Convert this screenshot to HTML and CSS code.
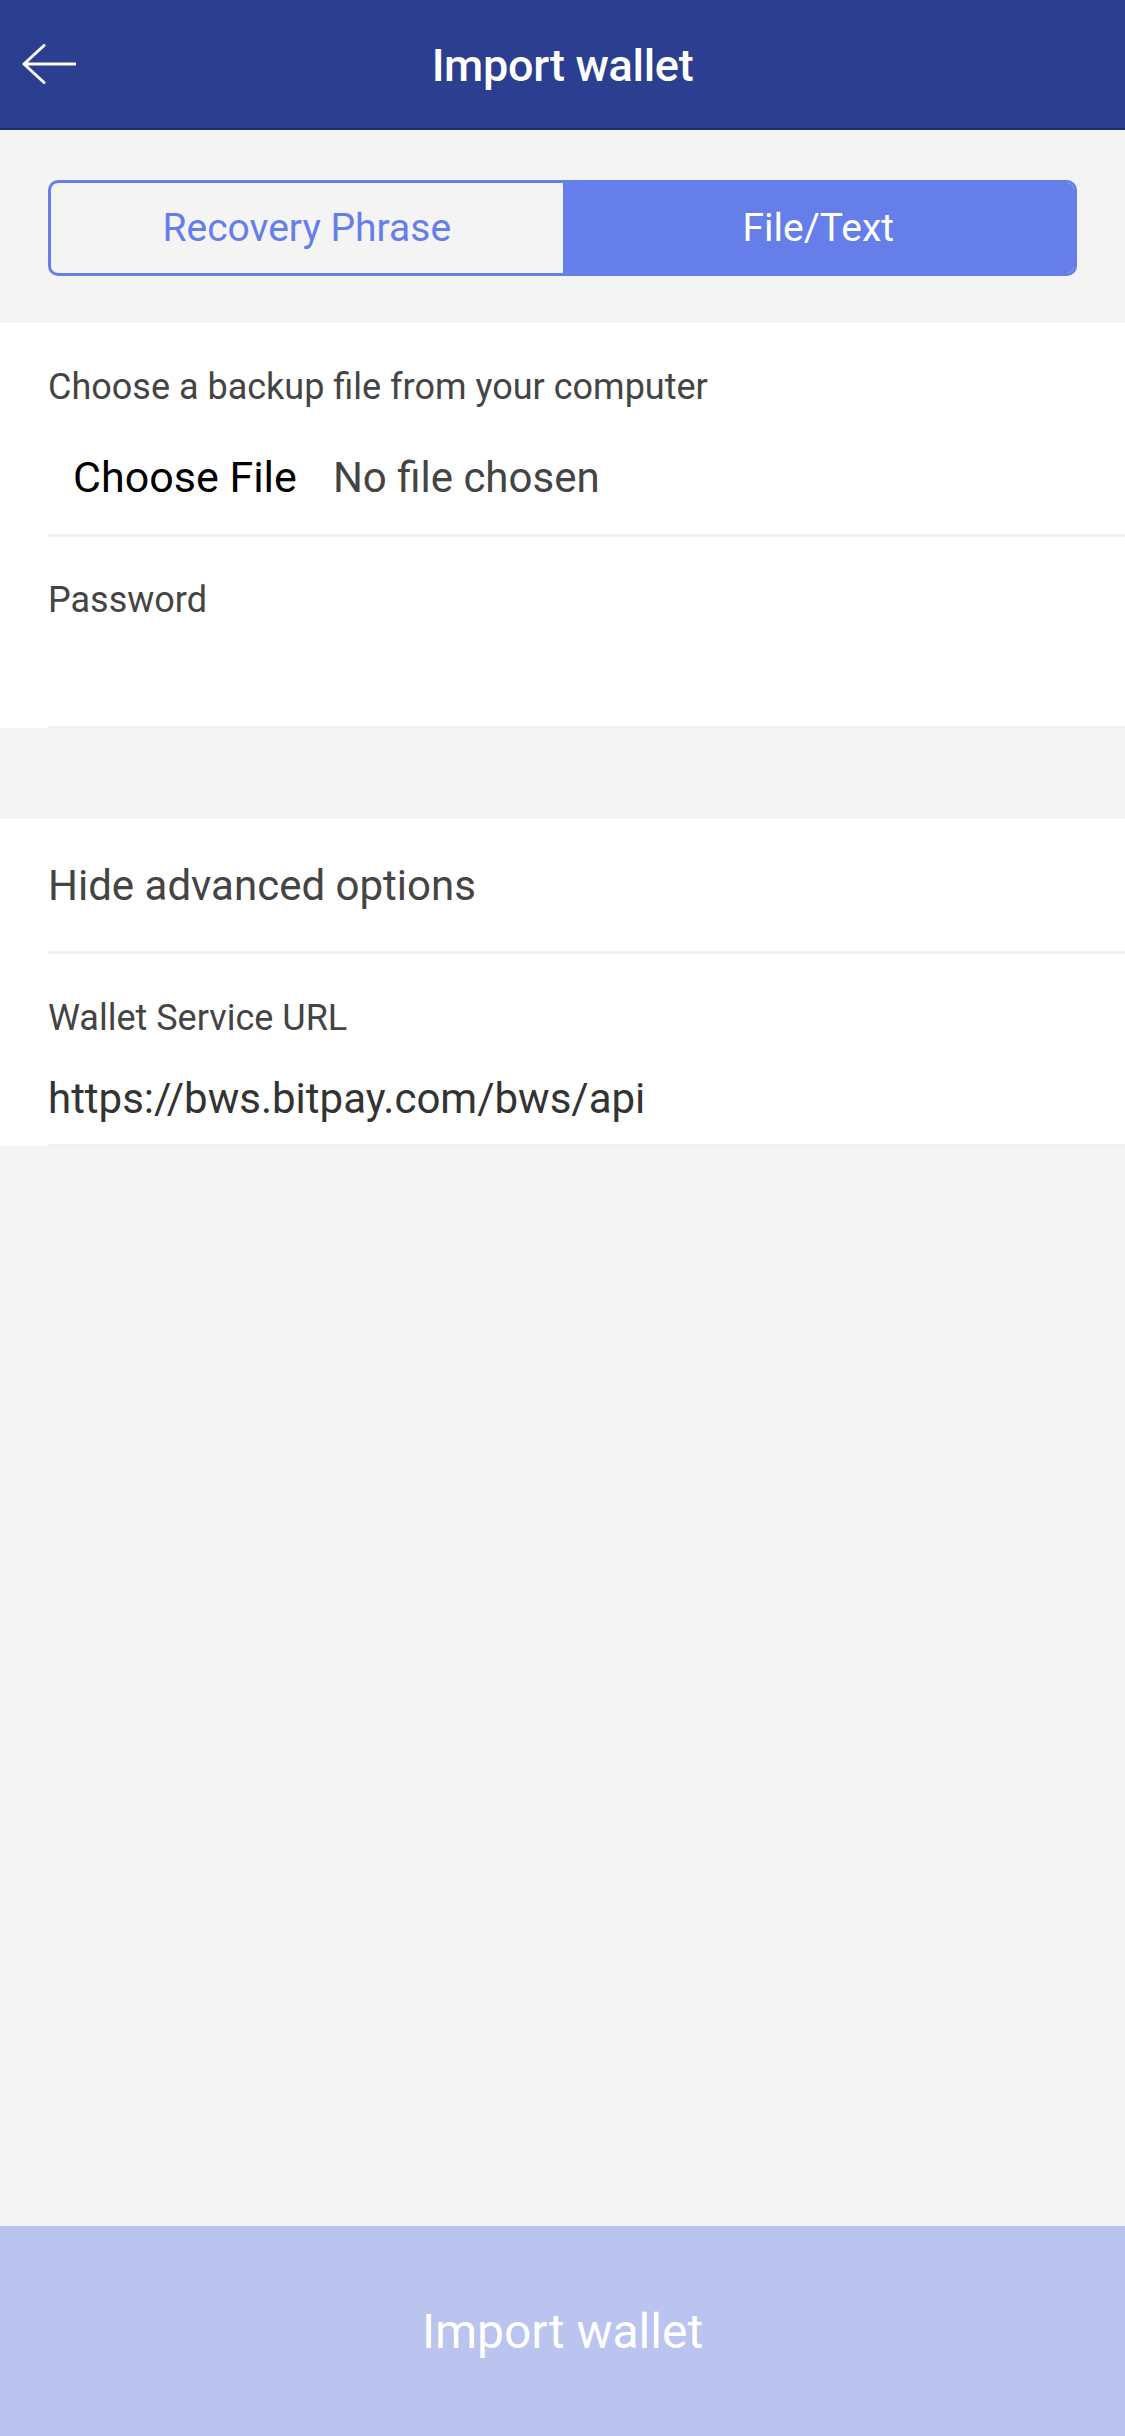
FILE: index.html
```html
<!DOCTYPE html>
<html lang="en">
<head>
<meta charset="utf-8">
<title>Import wallet</title>
<link rel="stylesheet" href="styles.css">
</head>
<body>
<div class="app">
  <header class="topbar">
    <button class="back" aria-label="Back">
      <svg width="54" height="40" viewBox="0 0 54 40" fill="none" stroke="#fff" stroke-width="3" stroke-linecap="round" stroke-linejoin="round">
        <path d="M2 20 H53 M22 1.5 L2 20 L22 38.5"/>
      </svg>
    </button>
    <h1 class="title">Import wallet</h1>
    <span></span>
  </header>

  <div class="segment-wrap">
    <div class="segment">
      <button class="seg-btn">Recovery Phrase</button>
      <button class="seg-btn active">File/Text</button>
    </div>
  </div>

  <section class="card">
    <div class="item item-file">
      <div class="label">Choose a backup file from your computer</div>
      <div class="file-row">
        <span class="file-btn">Choose File</span>
        <span class="file-name">No file chosen</span>
      </div>
    </div>
    <div class="item item-pass">
      <div class="label">Password</div>
      <input class="pass-input" type="password" aria-label="Password">
    </div>
  </section>

  <section class="card card-adv">
    <div class="item item-toggle">
      <div class="toggle-text">Hide advanced options</div>
    </div>
    <div class="item item-url">
      <div class="label">Wallet Service URL</div>
      <div class="url">https://bws.bitpay.com/bws/api</div>
    </div>
  </section>

  <div class="spacer"></div>

  <button class="import-btn">Import wallet</button>
</div>
</body>
</html>
```

FILE: styles.css
```css
* { box-sizing: border-box; }

html, body {
  margin: 0;
  padding: 0;
}

body {
  background: #f4f4f4;
  font-family: Roboto, "Noto Sans", "Liberation Sans", sans-serif;
}

.app {
  min-height: 2436px;
  display: flex;
  flex-direction: column;
}

.topbar {
  height: 130px;
  background: #2b3e8f;
  border-bottom: 2px solid #1f2c68;
  display: grid;
  grid-template-columns: 1fr auto 1fr;
  align-items: center;
}

.back {
  justify-self: start;
  background: none;
  border: 0;
  padding: 0 0 0 22px;
  margin: 0;
  display: flex;
  align-items: center;
  cursor: pointer;
}

.title {
  margin: 0;
  color: #fff;
  font-size: 45px;
  font-weight: 500;
  line-height: 54px;
  letter-spacing: -0.3px;
  padding-top: 4px;
}

.segment-wrap {
  padding: 50px 48px 47px;
}

.segment {
  display: grid;
  grid-template-columns: 1fr 1fr;
  height: 96px;
  border: 3px solid #667eea;
  border-radius: 10px;
  overflow: hidden;
}

.seg-btn {
  border: 0;
  margin: 0;
  background: transparent;
  color: #667eea;
  font-family: inherit;
  font-size: 39px;
  font-weight: 400;
}

.seg-btn.active {
  background: #667eea;
  color: #fff;
}

.card {
  background: #fff;
  padding-left: 48px;
}

.card-adv {
  margin-top: 91px;
}

.item {
  border-bottom: 3px solid #f1f1f1;
}

.label {
  font-size: 36px;
  line-height: 40px;
  color: #444;
}

.item-file {
  padding: 44px 0 31px;
}

.file-row {
  margin-top: 45px;
  padding-left: 25px;
  display: flex;
  align-items: baseline;
  gap: 36px;
  font-size: 43px;
  line-height: 50px;
}

.file-btn { color: #000; }
.file-name { color: #444; font-size: 42px; }

.item-pass {
  padding-top: 43px;
  border-bottom-width: 2px;
}

.pass-input {
  display: block;
  width: 100%;
  height: 106px;
  border: 0;
  outline: none;
  background: transparent;
  font-size: 42px;
}

.item-toggle {
  padding: 42px 0 40px;
}

.toggle-text {
  font-size: 42px;
  line-height: 50px;
  color: #444;
}

.item-url {
  padding: 44px 0 20px;
  border-bottom-width: 2px;
}

.url {
  margin-top: 36px;
  font-size: 42px;
  line-height: 50px;
  color: #333;
}

.spacer {
  flex: 1;
}

.import-btn {
  height: 210px;
  width: 100%;
  border: 0;
  margin: 0;
  background: #bac4ef;
  color: #fff;
  font-family: inherit;
  font-size: 48px;
  font-weight: 400;
}
```
